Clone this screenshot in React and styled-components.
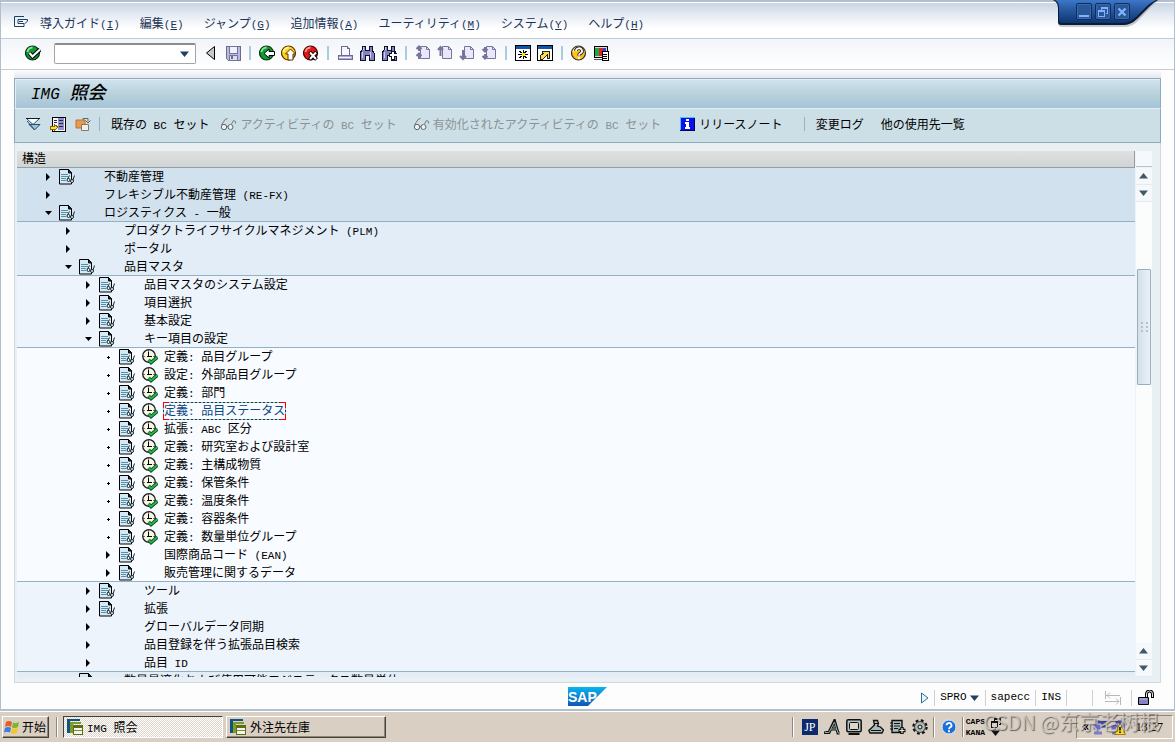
import React from "react";
import styled, { createGlobalStyle, css } from "styled-components";

const Global = createGlobalStyle`
  * { box-sizing: border-box; }
  body {
    margin: 0;
    background: #fff;
    color: #000;
    font-family: "Noto Sans CJK JP", "Liberation Sans", sans-serif;
    font-size: 12px;
    line-height: 18px;
  }
  button, input { font: inherit; color: inherit; }
  svg { display: block; flex: none; }
`;

/* ---------- text ---------- */

const Latin = styled.span`
  font-family: "Liberation Mono", monospace;
  font-size: ${(p) => (p.$large ? 16 : 11)}px;
  line-height: 1;
  white-space: pre;
`;

function Mixed({ text, large }) {
  return text
    .split(/([\x20-\x7e]+)/)
    .filter(Boolean)
    .map((part, i) =>
      /^[\x20-\x7e]/.test(part) ? (
        <Latin key={i} $large={large}>{part}</Latin>
      ) : (
        <span key={i}>{part}</span>
      )
    );
}

/* ---------- icons ---------- */

function Svg({ w = 16, h = 16, crisp, children }) {
  return (
    <svg
      width={w}
      height={h}
      viewBox={`0 0 ${w} ${h}`}
      fill="none"
      shapeRendering={crisp ? "crispEdges" : undefined}
      aria-hidden="true"
    >
      {children}
    </svg>
  );
}

const Ball = ({ dark, base, light, children }) => (
  <Svg>
    <circle cx="7.5" cy="8" r="7" fill={base} stroke={dark} strokeWidth="1.2" />
    <path d="M2.5 7a5 5 0 0 1 5-4.5" stroke={light} strokeWidth="1.8" />
    {children}
  </Svg>
);
const EnterIcon = () => (
  <Ball dark="#06340f" base="#0f9a33" light="#8ee49c">
    <path d="M4.5 8l3 3.5L15 4.5" stroke="#000" strokeWidth="4.2" />
    <path d="M4.5 8l3 3.5L15 4.5" stroke="#fff" strokeWidth="2.2" />
  </Ball>
);
const BackIcon = () => (
  <Ball dark="#06340f" base="#0f9a33" light="#8ee49c">
    <path d="M5 8.5l5-4.5v2.5h5.5v4H10V13z" fill="#fff" stroke="#000" />
  </Ball>
);
const ExitIcon = () => (
  <Ball dark="#5a3200" base="#ffd21c" light="#fff49a">
    <path d="M9.5 4l5 5H12v6H7V9H4.5z" fill="#fff" stroke="#5a3200" />
  </Ball>
);
const CancelIcon = () => (
  <Ball dark="#4d0000" base="#e01818" light="#ff9a8c">
    <path d="M6.5 7l7 7.5M13.5 7l-7 7.5" stroke="#000" strokeWidth="4" />
    <path d="M7 7.5l6 6.5M13 7.5L7 14" stroke="#fff" strokeWidth="2" />
  </Ball>
);
const HelpIcon = () => (
  <Ball dark="#333" base="#ffc020" light="#fff08c">
    <path d="M5 6a3 2.7 0 1 1 4.5 2.3Q8 9 8 10.500" stroke="#222" strokeWidth="3.6" />
    <path d="M5 6a3 2.7 0 1 1 4.5 2.3Q8 9 8 10.500M8 12v2" stroke="#fff" strokeWidth="1.8" />
  </Ball>
);
const CollapseIcon = () => (
  <Svg><path d="M11.5 1.5v13L3.5 8z" fill="#c8c8c8" stroke="#000" /></Svg>
);
const SaveIcon = () => (
  <Svg crisp>
    <path d="M1 1h14v14H3l-2-2z" fill="#b9b9e6" stroke="#6d6a8c" />
    <path d="M4 1h8v7H4z" fill="#f1f1fb" stroke="#77749a" />
    <path d="M4 10h8v5H4z" fill="#dadaf2" stroke="#77749a" />
    <path d="M6 11h2v3H6z" fill="#6d6a8c" />
  </Svg>
);
const PrintIcon = () => (
  <Svg crisp>
    <path d="M4 1h6l2 2v7H4z" fill="#f6f6ff" stroke="#6d6a8c" />
    <path d="M10 1v2h2M1 10h14v4H1z" fill="#a9a9dc" stroke="#6d6a8c" />
    <path d="M2 12h12" stroke="#f4f4ff" />
  </Svg>
);
const FindIcon = ({ plus }) => (
  <Svg crisp>
    <path d="M3 1h3v4h4V1h3v4l2 3v7h-5v-5H6v5H1V8l2-3z" fill="#8583c0" stroke="#10102c" />
    <path d="M3 7v6M11 7v6M4 2v3" stroke="#cfcff4" />
    {plus && <path d="M10 6h3v2h3v3h-3v3h-3v-3H8V8h2z" fill="#fff" stroke="#10102c" />}
  </Svg>
);
const PAGE_ARROWS = {
  first: "M4 1v5M1.5 4L4 1.5 6.5 4M4 8v6M1.5 11L4 8.5l2.5 2.5",
  previous: "M3.5 2v9M1 5l2.5-3L6 5",
  next: "M4 5v9M1 11l3 3 3-3",
  last: "M4 2v5M1.5 4L4 6.5 6.5 4M4 9v5M1.5 11L4 13.5 6.5 11",
};
const PageIcon = ({ kind }) => (
  <Svg>
    <path d="M5.5 1.5h6l3 3v9h-9z" fill="#e9e7fb" stroke="#77749a" />
    <path d="M11.5 1.5v3h3" stroke="#77749a" />
    <path d={PAGE_ARROWS[kind]} stroke="#77749a" strokeWidth="2" />
  </Svg>
);
const SessionIcon = ({ shortcut }) => (
  <Svg crisp>
    <path d="M0 0h16v16H0z" fill="#000" />
    <path d="M1 4h14v11H1z" fill="#fff" />
    <path d="M1 1h14v3H1z" fill="#0c55a8" />
    {shortcut ? (
      <path d="M5 6h7v7h-2v-3l-4 4H3v-3l4-3H5z" fill="#ffe040" stroke="#222" />
    ) : (
      <>
        <path d="M8 5v3M8 11v3M3 9.500h4M9 9.500h4M4 6l3 2M12 6L9 8M4 13l3-2M12 13l-3-2" stroke="#000" />
        <path d="M7 8h3v3H7z" fill="#ffe600" />
      </>
    )}
  </Svg>
);
const LayoutIcon = () => (
  <Svg crisp>
    <path d="M1 1h13v11H1z" fill="#d8d8d8" stroke="#000" />
    <path d="M2 3h4v8H2z" fill="#1cab3c" />
    <path d="M6 3h4v8H6z" fill="#e0222c" />
    <path d="M10 3h3v8h-3z" fill="#2846d8" />
    <path d="M1 14h8" stroke="#555" />
    <path d="M9 6h6v9H9z" fill="#fff" stroke="#000" />
    <path d="M10 9h4M10 11h4M10 13h4" stroke="#000" />
  </Svg>
);
const SystemMenuIcon = () => (
  <Svg>
    <path d="M11 1.5H1.5v10H11M5 4.5h9.5V6L11 9.500M5 4.5v4h6M6 6.5h4M11 9.500v2" stroke="#1c3f66" />
  </Svg>
);
const ExpandIcon = () => (
  <Svg>
    <path d="M1.5 2.5h13L8 8.5z" fill="#fff" stroke="#24506e" />
    <path d="M4 8.5h11L9.5 14z" fill="#9cc4dc" stroke="#24506e" />
    <path d="M2 5l7.5 8.5" stroke="#24506e" />
    <path d="M1 2.5h14" stroke="#101820" />
  </Svg>
);
const PositionIcon = () => (
  <Svg crisp>
    <path d="M2 1h13v14H2z" fill="#f4f4ff" stroke="#000" />
    <path d="M8 2h6v12H8z" fill="#9290c4" />
    <path d="M9 4h4M9 7h4M9 10h4M4 4h3M4 6h3" stroke="#26264c" />
    <path d="M0 10h4V8l4 3-4 4v-2H0z" fill="#ffe030" stroke="#8c6400" />
  </Svg>
);
const CopyIcon = () => (
  <Svg>
    <path d="M1 4h9v8H1z" fill="#e99a4c" stroke="#b8753a" />
    <path d="M6.5 8.5h7v6h-7z" fill="#f4efe6" stroke="#7e7a72" />
    <path d="M8 4V2.5h5v3M10.5 4.5L13 7l2.5-2.5" stroke="#6a665e" />
  </Svg>
);
const GlassesIcon = () => (
  <Svg w={17}>
    <path d="M7.5 2.5L5 3.5 1.5 9M11.5 8l2-3.5 2 1v2M6.5 10.5h2" stroke="#74787a" />
    <circle cx="4" cy="11" r="2.7" fill="#eef2f3" stroke="#63676a" />
    <circle cx="10.5" cy="11" r="2.5" fill="#eef2f3" stroke="#63676a" />
  </Svg>
);
const InfoIcon = () => (
  <Svg crisp>
    <path d="M0 1h15v14H0z" fill="#000060" />
    <path d="M1 2h13v12H1z" fill="#0a10e8" />
    <path d="M0 1h15v1H1v12H0z" fill="#49c6f4" />
    <path d="M6 3h3v2H6zM5 6h4v5h1v2H5v-2h1V8H5z" fill="#fff" />
  </Svg>
);
const DocIcon = () => (
  <Svg>
    <path d="M.5.5h9l3 3.5v11H.5z" fill="#d6eaf6" stroke="#000" />
    <path d="M9.5.5V4h3z" fill="#1d3c4a" stroke="#000" />
    <path d="M2 5.5h7M2 7.5h7M2 9.5h5M2 11.5h5" stroke="#5590a8" />
    <path d="M8.5 10l2-3.5M14 11l1.5-4.5" stroke="#15252d" />
    <circle cx="9.5" cy="11" r="1.5" fill="#e9f5fb" stroke="#15252d" />
    <circle cx="13" cy="12" r="1.5" fill="#e9f5fb" stroke="#15252d" />
  </Svg>
);
const ExecuteIcon = () => (
  <Svg>
    <circle cx="7" cy="7" r="6.3" fill="#f7f6e4" stroke="#1c1c1c" strokeWidth="1.3" />
    <path d="M6.5 3v5M5 7.5h5M6.5 1.5v1M1.5 7.5h1M11.5 7.5h1" stroke="#000" />
    <path d="M6.5 11L9 13.5 15.500 8" stroke="#0b4a1c" strokeWidth="3.6" />
    <path d="M6.5 11L9 13.5 15.500 8" stroke="#28b04a" strokeWidth="2" />
  </Svg>
);
const NodeArrow = ({ kind }) => (
  <Svg w={8} h={8}>
    {kind === "closed" && <path d="M2 0l4 4-4 4z" fill="#000" />}
    {kind === "open" && <path d="M1 2h7L4.5 6z" fill="#000" />}
    {kind === "leaf" && <path d="M4 3h1v1h1v1H5v1H4V5H3V4h1z" fill="#000" />}
  </Svg>
);
const Caret = ({ up, color = "#3e5a66" }) => (
  <Svg w={10} h={6}>
    <path d={up ? "M0 5.5h9L4.5 0z" : "M0 .5h9L4.5 6z"} fill={color} />
  </Svg>
);
const SapLogo = () => (
  <svg width="39" height="19" viewBox="0 0 39 19" role="img" aria-label="SAP">
    <defs>
      <linearGradient id="sap" x1="0" y1="0" x2="0" y2="1">
        <stop offset="0" stopColor="#09b5ec" />
        <stop offset="1" stopColor="#1257b4" />
      </linearGradient>
    </defs>
    <path d="M0 0h39L20 19H0z" fill="url(#sap)" />
    <text
      x="0"
      y="15"
      fill="#fff"
      fontFamily="Liberation Sans, sans-serif"
      fontWeight="700"
      fontSize="14"
    >
      SAP
    </text>
  </svg>
);
const PlayIcon = () => (
  <Svg w={9} h={12}><path d="M1.5 1v10L8 6z" fill="#eaf4fb" stroke="#2f7099" /></Svg>
);
const TransferIcon = () => (
  <Svg w={18} h={14}>
    <path d="M1.5 0v8M2 4.5h14M6 1.5l-3 3 3 3M16.5 6v8M1 10.5h14M12 7.5l3 3-3 3" stroke="#b9b9b9" />
  </Svg>
);
const LockIcon = () => (
  <Svg>
    <path d="M8.5 7V4a3 3 0 0 1 6 0v4" stroke="#000" strokeWidth="3" />
    <path d="M8.5 7V4a3 3 0 0 1 6 0v3" stroke="#e8e8f4" />
    <path d="M.5 7.5h10v7H.5z" fill="#8583c0" stroke="#000" />
    <path d="M2 9h7" stroke="#bdbce6" />
  </Svg>
);
const WindowsLogo = () => (
  <Svg w={16} h={14}>
    <path d="M2 2q3-2 6 0L7 7Q4 5 1 7z" fill="#ee5a24" />
    <path d="M9 2.5q3 1.500 6-.5l-1 5q-3 2-6 .5z" fill="#79b82c" />
    <path d="M1 8q3-2 6 0l-1 4.5Q3 11 0 12.5z" fill="#3c7be0" />
    <path d="M8 8.5q3 1.500 6-.5l-1 4.5q-3 2-6 .5z" fill="#fcc419" />
  </Svg>
);
const SapWindowIcon = () => (
  <Svg crisp>
    <path d="M0 0h13v2H3v12H0z" fill="#0f5483" />
    <path d="M3 3h11v2H6v9H3z" fill="#7f9a28" />
    <path d="M6 6h10v10H6z" fill="#5a6f14" />
    <path d="M7 9h8v6H7z" fill="#f4f4ec" />
    <path d="M7 11.5h8" stroke="#7a8a3c" />
  </Svg>
);
const ImeA = () => (
  <Svg>
    <path d="M1 12v1.5h4L10.5 2 14 14h1.5M7 10h6" stroke="#111" strokeWidth="3" />
    <path d="M1 12v1.5h4L10.5 3 14 14h1.5M7 10h6" stroke="#8fb0ac" />
  </Svg>
);
const ImeScreen = () => (
  <Svg>
    <rect x=".8" y=".8" width="14.4" height="12" rx="1.5" fill="#b8c4c4" stroke="#111" strokeWidth="1.5" />
    <rect x="3.5" y="3.5" width="9" height="7" rx="1" fill="#dcd6cc" stroke="#111" />
    <path d="M2.5 15h11" stroke="#111" strokeWidth="2" />
  </Svg>
);
const ImeTool = () => (
  <Svg>
    <path
      d="M5.5 1.5h4l1 3-1 2.5 3 1 3 3-1.5 3H2L.8 11.5 4.5 8l2-2z"
      fill="#a9bcb8"
      stroke="#111"
      strokeWidth="1.3"
    />
    <path d="M3 11.5h10M6 4.5h4" stroke="#111" />
  </Svg>
);
const ImeDict = () => (
  <Svg>
    <path d="M2 1.5h10v12H2z" fill="#a9bcb8" stroke="#111" strokeWidth="1.4" />
    <path d="M4 4.5h6M4 7h6M4 9.5h4M0 4h3M0 7h3M0 10h3" stroke="#111" />
    <path d="M12 8v7M8.5 11.5h7" stroke="#111" strokeWidth="3.4" />
    <path d="M12 9v5M9.5 11.5h5" stroke="#e6eeec" strokeWidth="1.2" />
  </Svg>
);
const ImeGear = () => (
  <Svg>
    <circle cx="8" cy="8" r="6.2" stroke="#111" strokeWidth="3" strokeDasharray="2.6 2.27" />
    <circle cx="8" cy="8" r="5.4" fill="#a9bcb8" stroke="#444" />
    <circle cx="8" cy="8" r="2" fill="#dcd6cc" stroke="#111" />
  </Svg>
);
const ImeHelp = () => (
  <Svg>
    <circle cx="8" cy="8" r="7" fill="#1c6fd6" stroke="#dfe9f6" />
    <path d="M5.5 6.3a2.5 2.3 0 1 1 3.7 2Q8 9 8 10.3M8 11.3v2" stroke="#fff" strokeWidth="1.8" />
  </Svg>
);
const RestoreIcon = ({ color = "#7fb2ff" }) => (
  <Svg w={10} h={10} crisp>
    <path d="M3 0h7v7H8V6h1V2H4v1H3zM0 3h7v7H0zM1 5v4h5V5z" fillRule="evenodd" fill={color} />
  </Svg>
);
const MinimizeIcon = () => (
  <Svg w={10} h={10} crisp><path d="M0 8h10v2H0z" fill="#7fb2ff" /></Svg>
);
const CloseIcon = () => (
  <Svg w={10} h={10}><path d="M1.5 1.5l7 7M8.5 1.5l-7 7" stroke="#7fb2ff" strokeWidth="2.4" /></Svg>
);
const ChevronsIcon = () => (
  <Svg w={8} h={8}><path d="M4 1L1 4l3 3M7 1L4 4l3 3" stroke="#000" strokeWidth="1.2" /></Svg>
);
const NetworkIcon = ({ warn }) => (
  <Svg>
    <path d="M5 1h10v8H5z" fill="#4a4896" stroke="#c9c7ea" />
    <path d="M1 5h8v6H1z" fill="#6d6bc0" stroke="#c9c7ea" />
    <path d="M2 14h8" stroke="#7f7cc8" strokeWidth="3" />
    {warn && (
      <>
        <path d="M10 4.5l5.5 11h-11z" fill="#ffe01c" stroke="#8a6a00" strokeWidth=".8" />
        <path d="M10 8v3.5M10 12.5V14" stroke="#000" strokeWidth="1.6" />
      </>
    )}
  </Svg>
);

/* ---------- application window ---------- */

const Desktop = styled.div`
  height: 100vh;
  min-width: 1000px;
  display: flex;
  flex-direction: column;
  overflow: hidden;
`;
const Window = styled.main`
  position: relative;
  flex: 1;
  min-height: 0;
  display: flex;
  flex-direction: column;
  border: 1px solid #b2bfcc;
  border-top-width: 2px;
  border-bottom-width: 2px;
  background: #fdfdfe;
`;
const MenuBar = styled.nav`
  height: 37px;
  padding: 5px 0 0 12px;
  display: flex;
  align-items: center;
  gap: 20px;
  border-top: 1px solid #fff;
  border-bottom: 1px solid #c2c9d0;
  background: linear-gradient(#c9d5e2, #e6ecf4 35%, #fff 75%);
  color: #1c3458;
`;
const FlatButton = styled.button`
  display: flex;
  align-items: center;
  padding: 0;
  border: 0;
  background: none;
  white-space: nowrap;
  cursor: pointer;
  gap: 3px;
  &:disabled { color: #8b9295; cursor: default; }
`;
const SystemMenu = styled(FlatButton)`
  margin-right: -9px;
`;
const WindowControls = styled.div`
  position: absolute;
  top: -2px;
  right: 15px;
  width: 106px;
  height: 30px;
  padding: 3px 0 0 23px;
  display: flex;
  gap: 3px;
`;
const TabShape = styled.svg`
  position: absolute;
  top: 0;
  left: 0;
`;
const ControlButton = styled.button`
  position: relative;
  width: 16px;
  height: 17px;
  padding: 0;
  display: flex;
  align-items: center;
  justify-content: center;
  border: 1px solid #0c2f62;
  border-radius: 2px;
  background: #2a5796;
  box-shadow: inset 0 0 0 1px #3a69ab;
`;
const SystemBar = styled.div`
  height: 31px;
  padding: 0 0 2px 24px;
  display: flex;
  align-items: center;
  border-bottom: 1px solid #c8ccd2;
  background: linear-gradient(#f2f5f9, #fff);
`;
const IconGroup = styled.div`
  display: flex;
  gap: 6px;
`;
const Divider = styled.span`
  flex: none;
  width: 2px;
  height: 14px;
  margin: 0 8px;
  background: #a9cbdd;
  ${(p) => p.$thin && css`
    width: 1px;
    margin-right: 11px;
    background: #93b4c6;
  `}
`;
const CommandBox = styled.div`
  width: 142px;
  height: 21px;
  margin: 0 7px 0 13px;
  display: flex;
  border: 1px solid #a5a5a5;
  border-top: 2px solid #8f8d8b;
  border-radius: 2px;
  background: #fff;
`;
const CommandInput = styled.input`
  flex: 1;
  min-width: 0;
  padding: 0 4px;
  border: 0;
  background: none;
  outline: 0;
`;
const CommandDrop = styled(FlatButton)`
  padding: 0 5px;
`;
const Panel = styled.section`
  flex: 1;
  min-height: 0;
  margin: 0 13px;
  padding-top: 8px;
  display: flex;
  flex-direction: column;
  background: linear-gradient(#fbfcfd, #e4e8ee 8px, #fff 9px);
`;
const TitleBar = styled.header`
  height: 31px;
  flex: none;
  padding: 0 16px;
  border: 1px solid #8faabc;
  border-bottom-color: #e3eff5;
  box-shadow: inset 1px 1px 0 #e2eef4;
  background: linear-gradient(#d1e3ee, #b7d0d9 55%, #a6c4d8);
`;
const Title = styled.h1`
  margin: 0;
  font-size: 18px;
  line-height: 25px;
  font-weight: 500;
  font-style: italic;
`;
const AppBar = styled.div`
  flex: none;
  height: 34px;
  padding: 0 10px 3px;
  display: flex;
  align-items: center;
  border: 1px solid #8faabc;
  border-top: 0;
  background: #cddfe6;
`;
const AppIcons = styled.div`
  display: flex;
  gap: 9px;
`;
const AppButton = styled(FlatButton)`
  margin-right: ${(p) => p.$after}px;
`;
const Content = styled.div`
  flex: 1;
  min-height: 0;
  padding: 8px 8px 5px 2px;
  display: flex;
  border: 1px solid #d0d9df;
  border-top: 0;
  background: #e8f0f3;
`;
const TreeColumn = styled.div`
  flex: 1;
  min-width: 0;
  display: flex;
  flex-direction: column;
`;
const TreeHeader = styled.div`
  flex: none;
  height: 17px;
  padding-left: 5px;
  line-height: 14px;
  border-right: 1px solid #969c9e;
  border-bottom: 1px solid #979ea2;
  background: linear-gradient(#dfe1e0, #d0d4d4);
`;
const Tree = styled.ul`
  flex: 1;
  min-height: 0;
  margin: 0;
  padding: 0;
  overflow: hidden;
  list-style: none;
`;
const LEVEL_COLORS = ["#d1e2ee", "#e2edf7", "#edf4fc", "#f8fbff"];
const Branch = styled.li`
  border-bottom: 1px solid #93b1c1;
  background: ${(p) => LEVEL_COLORS[p.$level]};
`;
const Row = styled.div`
  height: 18px;
  padding-left: ${(p) => 27 + p.$level * 20}px;
  display: flex;
  align-items: center;
  &:last-child { height: 17px; }
`;
const Toggle = styled(FlatButton)`
  width: 15px;
`;
const Slot = styled.span`
  width: ${(p) => p.$w}px;
`;
const corner = (x, y) => css`
  linear-gradient(#f00, #f00) ${x} ${y} / 6px 1px,
  linear-gradient(#f00, #f00) ${x} ${y} / 1px 6px
`;
const Label = styled.span`
  height: 18px;
  line-height: 14px;
  border: 1px solid transparent;
  white-space: nowrap;
  ${(p) => p.$selected && css`
    color: #0c4680;
    background:
      ${corner("0", "0")},
      ${corner("100%", "0")},
      ${corner("0", "100%")},
      ${corner("100%", "100%")},
      repeating-linear-gradient(90deg, #173f45 0 2px, #8fc0ba 2px 4px) 0 0 / 100% 1px,
      repeating-linear-gradient(90deg, #173f45 0 2px, #8fc0ba 2px 4px) 0 100% / 100% 1px,
      repeating-linear-gradient(#173f45 0 2px, #8fc0ba 2px 4px) 0 0 / 1px 100%,
      repeating-linear-gradient(#173f45 0 2px, #8fc0ba 2px 4px) 100% 0 / 1px 100%;
    background-repeat: no-repeat;
    background-origin: border-box;
  `}
`;
const ScrollColumn = styled.div`
  width: 17px;
  padding-left: 1px;
  display: flex;
  flex-direction: column;
  background: #f0f3f6;
`;
const ScrollCorner = styled.div`
  height: 16px;
  margin-bottom: 1px;
  background: #f5f9fd;
  border-bottom: 1px solid #b8c2c8;
`;
const ScrollButton = styled.button`
  height: 17px;
  padding: 0;
  display: flex;
  align-items: center;
  justify-content: center;
  border: 0;
  border-bottom: 1px solid #e6eaee;
  background: #f6f9fc;
`;
const Track = styled.div`
  flex: ${(p) => p.$part} 1 0;
  background: #fbfcfc;
`;
const Thumb = styled.div`
  flex: 115 1 0;
  margin: 0 1px;
  display: grid;
  grid-template-columns: repeat(2, 2px);
  grid-auto-rows: 2px;
  gap: 2px 3px;
  place-content: center;
  border: 1px solid #9ab0bc;
  border-radius: 1px;
  background: linear-gradient(90deg, #d3e0ea, #e9f1f8);
`;
const Grip = styled.i`
  background: #b3c1ca;
`;
const StatusBar = styled.footer`
  flex: none;
  height: 26px;
  padding-top: 1px;
  display: grid;
  grid-template-columns: 1fr auto 1fr;
  align-items: center;
`;
const StatusFields = styled.div`
  grid-column: 3;
  justify-self: end;
  padding: 2px 20px 0 0;
  display: flex;
  align-items: center;
`;
const StatusLine = styled.span`
  width: 1px;
  height: 16px;
  margin: 0 ${(p) => p.$after || 5}px 0 ${(p) => p.$before || 5}px;
  background: #ccd0d4;
`;
const LogoCell = styled.div`
  grid-column: 2;
`;

/* ---------- taskbar ---------- */

const Taskbar = styled.footer`
  position: relative;
  flex: none;
  height: 31px;
  padding: 3px 2px 3px;
  display: flex;
  align-items: center;
  border-top: 1px solid #fff;
  background: #d9cfc3;
`;
const raised = css`
  border: 1px solid;
  border-color: #fff #45413c #45413c #fff;
  box-shadow: inset -1px -1px 0 #8f877d;
`;
const StartButton = styled.button`
  ${raised}
  width: 47px;
  height: 22px;
  padding: 0 1px 1px;
  display: flex;
  align-items: center;
  gap: 2px;
  background: #d9cfc3;
  font-family: "Noto Sans CJK SC", sans-serif;
  white-space: nowrap;
`;
const TaskDivider = styled.span`
  flex: none;
  width: 2px;
  height: 20px;
  margin: 0 5px 0 7px;
  border-left: 1px solid #8f877d;
  border-right: 1px solid #fff;
`;
const LanguageDivider = styled(TaskDivider)`
  margin: 0 ${(p) => (p.$tight ? 2 : 6)}px 0 5px;
`;
const TaskButton = styled.button`
  ${raised}
  width: 160px;
  height: 22px;
  margin-right: 3px;
  padding: 0 3px;
  display: flex;
  align-items: center;
  gap: 4px;
  background: #d9cfc3;
  ${(p) => p.$active && css`
    border-color: #45413c #fff #fff #45413c;
    box-shadow: none;
    background: repeating-conic-gradient(#fff 0 25%, #ddd5ca 0 50%) 0 0 / 2px 2px;
  `}
`;
const LanguageBar = styled.div`
  margin-left: auto;
  display: flex;
  align-items: center;
`;
const ImeButtons = styled.div`
  padding-left: 2px;
  display: flex;
  gap: 6px;
`;
const LanguageBadge = styled.button`
  width: 16px;
  height: 16px;
  padding: 0;
  border: 0;
  background: #0d2a6c;
  color: #fff;
  font-family: "Liberation Serif", serif;
  font-size: 12px;
  line-height: 16px;
`;
const KeyStates = styled.div`
  margin-right: 6px;
  font: 700 8px/11px "Liberation Mono", monospace;
`;
const TrayStack = styled.div`
  width: 85px;
  display: flex;
  flex-direction: column;
  gap: 2px;
`;
const Tray = styled.div`
  width: 97px;
  height: 24px;
  padding: 0 9px 0 5px;
  display: flex;
  align-items: center;
  border: 1px solid;
  border-color: #8f877d #fff #fff #8f877d;
  gap: 2px;
`;
const Clock = styled.time`
  margin-left: auto;
  font: 12px/18px "Liberation Serif", serif;
`;
const Watermark = styled.div`
  position: absolute;
  right: 16px;
  top: -3px;
  color: rgba(214, 210, 206, 0.8);
  font: 20px/26px "Noto Sans CJK SC", sans-serif;
  text-shadow: 1px 1px 1px rgba(70, 66, 62, 0.75);
  pointer-events: none;
  white-space: nowrap;
`;

/* ---------- data ---------- */

const MENUS = [
  ["導入ガイド", "I"],
  ["編集", "E"],
  ["ジャンプ", "G"],
  ["追加情報", "A"],
  ["ユーティリティ", "M"],
  ["システム", "Y"],
  ["ヘルプ", "H"],
];

const BRANCHES = [
  { level: 0, rows: [
    { t: "不動産管理", doc: true },
    { t: "フレキシブル不動産管理 (RE-FX)" },
    { t: "ロジスティクス - 一般", doc: true, open: true },
  ] },
  { level: 1, rows: [
    { t: "プロダクトライフサイクルマネジメント (PLM)" },
    { t: "ポータル" },
    { t: "品目マスタ", doc: true, open: true },
  ] },
  { level: 2, rows: [
    { t: "品目マスタのシステム設定", doc: true },
    { t: "項目選択", doc: true },
    { t: "基本設定", doc: true },
    { t: "キー項目の設定", doc: true, open: true },
  ] },
  { level: 3, rows: [
    { t: "定義: 品目グループ", doc: true, run: true },
    { t: "設定: 外部品目グループ", doc: true, run: true },
    { t: "定義: 部門", doc: true, run: true },
    { t: "定義: 品目ステータス", doc: true, run: true, selected: true },
    { t: "拡張: ABC 区分", doc: true, run: true },
    { t: "定義: 研究室および設計室", doc: true, run: true },
    { t: "定義: 主構成物質", doc: true, run: true },
    { t: "定義: 保管条件", doc: true, run: true },
    { t: "定義: 温度条件", doc: true, run: true },
    { t: "定義: 容器条件", doc: true, run: true },
    { t: "定義: 数量単位グループ", doc: true, run: true },
    { t: "国際商品コード (EAN)", doc: true },
    { t: "販売管理に関するデータ", doc: true },
  ] },
  { level: 2, rows: [
    { t: "ツール", doc: true },
    { t: "拡張", doc: true },
    { t: "グローバルデータ同期" },
    { t: "品目登録を伴う拡張品目検索" },
    { t: "品目 ID" },
  ] },
  { level: 1, rows: [{ t: "数量最適化および使用可能ロジスティクス数量単位", doc: true }] },
];

function TreeRow({ node, level }) {
  const kind = node.run ? "leaf" : node.open ? "open" : "closed";
  return (
    <Row $level={level}>
      <Toggle aria-label={node.t}><NodeArrow kind={kind} /></Toggle>
      <Slot $w={23}>{node.doc && <DocIcon />}</Slot>
      <Slot $w={21}>{node.run && <ExecuteIcon />}</Slot>
      <Label $selected={node.selected}><Mixed text={node.t} /></Label>
    </Row>
  );
}

const Tool = ({ label, children }) => (
  <FlatButton aria-label={label}>{children}</FlatButton>
);

export default function App() {
  return (
    <Desktop>
      <Global />
      <Window>
        <MenuBar>
          <SystemMenu aria-label="メニュー"><SystemMenuIcon /></SystemMenu>
          {MENUS.map(([name, key]) => (
            <FlatButton key={key}>
              <span>{name}<Latin>(<u>{key}</u>)</Latin></span>
            </FlatButton>
          ))}
        </MenuBar>

        <SystemBar>
          <Tool label="Enter"><EnterIcon /></Tool>
          <CommandBox>
            <CommandInput aria-label="コマンド" />
            <CommandDrop aria-label="履歴"><Caret color="#1f3f63" /></CommandDrop>
          </CommandBox>
          <IconGroup>
            <Tool label="閉じる"><CollapseIcon /></Tool>
            <Tool label="保存"><SaveIcon /></Tool>
          </IconGroup>
          <Divider />
          <IconGroup>
            <Tool label="戻る"><BackIcon /></Tool>
            <Tool label="終了"><ExitIcon /></Tool>
            <Tool label="中止"><CancelIcon /></Tool>
          </IconGroup>
          <Divider />
          <IconGroup>
            <Tool label="印刷"><PrintIcon /></Tool>
            <Tool label="検索"><FindIcon /></Tool>
            <Tool label="次検索"><FindIcon plus /></Tool>
          </IconGroup>
          <Divider />
          <IconGroup>
            <Tool label="先頭ページ"><PageIcon kind="first" /></Tool>
            <Tool label="前ページ"><PageIcon kind="previous" /></Tool>
            <Tool label="次ページ"><PageIcon kind="next" /></Tool>
            <Tool label="最終ページ"><PageIcon kind="last" /></Tool>
          </IconGroup>
          <Divider />
          <IconGroup>
            <Tool label="新規セッション"><SessionIcon /></Tool>
            <Tool label="ショートカット"><SessionIcon shortcut /></Tool>
          </IconGroup>
          <Divider />
          <IconGroup>
            <Tool label="ヘルプ"><HelpIcon /></Tool>
            <Tool label="レイアウト"><LayoutIcon /></Tool>
          </IconGroup>
        </SystemBar>

        <WindowControls>
          <TabShape width="106" height="30" viewBox="0 0 106 30" aria-hidden="true">
            <defs>
              <linearGradient id="tab" x1="0" y1="0" x2="0" y2="1">
                <stop offset="0" stopColor="#3c78c8" />
                <stop offset="0.35" stopColor="#2c5da6" />
                <stop offset="1" stopColor="#0d3570" />
              </linearGradient>
            </defs>
            <path d="M0 0q5 3 5 9v14q0 4 4 4h62q8 0 14-6L98 7q5-5 8-7z" fill="#8f8f92" opacity="0.45" />
            <path d="M0 0q5 2 5 8v14q0 3 3 3h62q8 0 14-6L96 7q5-5 9-7z" fill="#0a1c36" />
            <path d="M2 0q4 2 4 8v12q0 3 3 3h60q8 0 14-6L94 6q5-4 9-6z" fill="url(#tab)" />
          </TabShape>
          <ControlButton aria-label="最小化"><MinimizeIcon /></ControlButton>
          <ControlButton aria-label="元に戻す"><RestoreIcon /></ControlButton>
          <ControlButton aria-label="閉じる"><CloseIcon /></ControlButton>
        </WindowControls>

        <Panel>
          <TitleBar><Title><Mixed text="IMG 照会" large /></Title></TitleBar>
          <AppBar>
            <AppIcons>
              <Tool label="展開"><ExpandIcon /></Tool>
              <Tool label="位置付け"><PositionIcon /></Tool>
              <Tool label="コピー"><CopyIcon /></Tool>
            </AppIcons>
            <Divider $thin />
            <AppButton $after={11}><span><Mixed text="既存の BC セット" /></span></AppButton>
            <AppButton $after={16} disabled>
              <GlassesIcon /><span><Mixed text="アクティビティの BC セット" /></span>
            </AppButton>
            <AppButton $after={19} disabled>
              <GlassesIcon /><span><Mixed text="有効化されたアクティビティの BC セット" /></span>
            </AppButton>
            <AppButton $after={13}><InfoIcon /><span>リリースノート</span></AppButton>
            <Divider $thin />
            <AppButton $after={17}><span>変更ログ</span></AppButton>
            <AppButton $after={0}><span>他の使用先一覧</span></AppButton>
          </AppBar>

          <Content>
            <TreeColumn>
              <TreeHeader>構造</TreeHeader>
              <Tree>
                {BRANCHES.map((branch, i) => (
                  <Branch key={i} $level={branch.level}>
                    {branch.rows.map((node) => (
                      <TreeRow key={node.t} node={node} level={branch.level} />
                    ))}
                  </Branch>
                ))}
              </Tree>
            </TreeColumn>
            <ScrollColumn>
              <ScrollCorner />
              <ScrollButton aria-label="上へ"><Caret up /></ScrollButton>
              <ScrollButton aria-label="下へ"><Caret /></ScrollButton>
              <Track $part={67} />
              <Thumb>{[0, 1, 2, 3, 4, 5].map((n) => <Grip key={n} />)}</Thumb>
              <Track $part={260} />
              <ScrollButton aria-label="上スクロール"><Caret up /></ScrollButton>
              <ScrollButton aria-label="下スクロール"><Caret /></ScrollButton>
            </ScrollColumn>
          </Content>
        </Panel>

        <StatusBar>
          <LogoCell><SapLogo /></LogoCell>
          <StatusFields>
            <PlayIcon />
            <StatusLine />
            <FlatButton><Latin>SPRO</Latin><Caret color="#1f3f63" /></FlatButton>
            <StatusLine />
            <Latin>sapecc</Latin>
            <StatusLine />
            <Latin>INS</Latin>
            <StatusLine />
            <StatusLine $before={20} $after={11} />
            <TransferIcon />
            <StatusLine $before={9} $after={6} />
            <LockIcon />
          </StatusFields>
        </StatusBar>
      </Window>

      <Taskbar>
        <StartButton><WindowsLogo />开始</StartButton>
        <TaskDivider />
        <TaskButton $active><SapWindowIcon /><span><Mixed text="IMG 照会" /></span></TaskButton>
        <TaskButton><SapWindowIcon /><span>外注先在庫</span></TaskButton>
        <LanguageBar>
          <LanguageDivider />
          <ImeButtons>
            <LanguageBadge>JP</LanguageBadge>
            <Tool label="入力モード"><ImeA /></Tool>
            <Tool label="キーボード"><ImeScreen /></Tool>
            <Tool label="ツール"><ImeTool /></Tool>
            <Tool label="辞書"><ImeDict /></Tool>
            <Tool label="設定"><ImeGear /></Tool>
          </ImeButtons>
          <LanguageDivider />
          <Tool label="IME ヘルプ"><ImeHelp /></Tool>
          <LanguageDivider $tight />
          <KeyStates>CAPS<br />KANA</KeyStates>
          <TrayStack>
            <RestoreIcon color="#111" />
            <Caret color="#111" />
          </TrayStack>
          <Tray>
            <ChevronsIcon />
            <NetworkIcon />
            <NetworkIcon warn />
            <Clock>13:27</Clock>
          </Tray>
        </LanguageBar>
        <Watermark>CSDN @东京老树根</Watermark>
      </Taskbar>
    </Desktop>
  );
}
